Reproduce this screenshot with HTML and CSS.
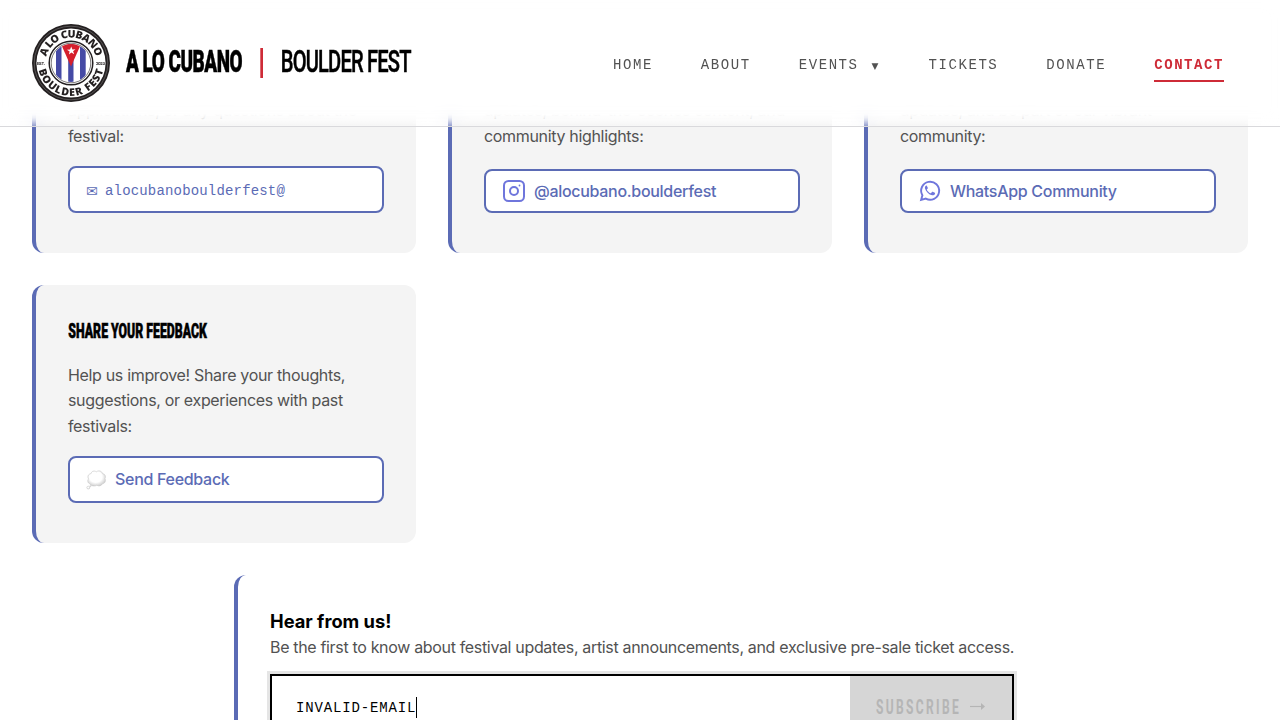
FILE: index.html
```html
<!DOCTYPE html>
<html lang="en">
<head>
<meta charset="utf-8">
<title>Contact | A Lo Cubano Boulder Fest</title>
<link rel="stylesheet" href="styles.css">
</head>
<body>
<header class="header">
  <a class="brand">
    <svg class="logo" width="78" height="78" viewBox="0 0 78 78">
      <defs>
        <path id="arc-top" d="M13.500 39a25.500 25.500 0 0 1 51 0"/>
        <path id="arc-bottom" d="M6 39a33 33 0 0 0 66 0"/>
        <clipPath id="flag"><circle cx="39" cy="39" r="19"/></clipPath>
      </defs>
      <circle cx="39" cy="39" r="39" fill="#231f20"/>
      <circle cx="39" cy="39" r="36.800" fill="none" stroke="#8b8889" stroke-width=".5"/>
      <circle cx="39" cy="39" r="34.600" fill="#fff"/>
      <circle cx="39" cy="39" r="21.800" fill="#fff" stroke="#231f20" stroke-width="1.500"/>
      <circle cx="39" cy="39" r="19.800" fill="none" stroke="#231f20" stroke-width=".6"/>
      <g clip-path="url(#flag)">
        <path fill="#454aa5" d="M24 19h5.500v40H24zM36.200 19h5.300v40h-5.300zM48 19h5.700v40H48z"/>
        <path fill="#d5202d" d="M28.500 19h21L39 42.500z"/>
        <path fill="#fff" d="M39.200 22.500l1.200 2.900 3.100-.2-2.400 2 1.100 3-2.800-1.600-2.500 2 .7-3.200-2.600-1.700 3.100-.3z"/>
      </g>
      <text class="logo-text"><textPath href="#arc-top" startOffset="50%" text-anchor="middle" textLength="67">A LO CUBANO</textPath></text>
      <text class="logo-text"><textPath href="#arc-bottom" startOffset="50%" text-anchor="middle" textLength="89">BOULDER FEST</textPath></text>
      <text class="logo-year" x="5" y="40.500" textLength="8">EST.</text>
      <text class="logo-year" x="64" y="40.500" textLength="9">2023</text>
    </svg>
    <svg class="wordmark" width="290" height="34" viewBox="0 0 290 34">
      <text class="word-bold" transform="scale(.62 1)" x="1.600" y="26.400" textLength="188">A LO CUBANO</text>
      <path fill="#ce2b37" d="M135.300 2h2.700v30h-2.700z"/>
      <text class="word" transform="scale(.66 1)" x="236" y="26.400" textLength="198">BOULDER FEST</text>
    </svg>
  </a>
  <nav class="nav">
    <a>HOME</a><a>ABOUT</a><a>EVENTS <span class="caret">▼</span></a><a>TICKETS</a><a>DONATE</a><a class="active">CONTACT</a>
  </nav>
</header>
<main class="main">
  <section class="cards">
    <article class="card">
      <p>applications, or any questions about the<br>festival:</p>
      <a class="button mail"><span class="envelope">✉</span><span>alocubanoboulderfest@</span></a>
    </article>
    <article class="card">
      <p>updates, behind-the-scenes content, and<br>community highlights:</p>
      <a class="button social">
        <svg width="24" height="24" viewBox="0 0 24 24" fill="none" stroke="#6f76dc" stroke-width="2"><rect x="2" y="2" width="20" height="20" rx="4.500"/><circle cx="12" cy="12" r="4"/><circle cx="17.500" cy="6.500" r=".9" fill="#6f76dc" stroke="none"/></svg>
        <span>@alocubano.boulderfest</span>
      </a>
    </article>
    <article class="card">
      <p>updates, and be part of our vibrant<br>community:</p>
      <a class="button social">
        <svg width="24" height="24" viewBox="0 0 24 24"><path fill="none" stroke="#6f76dc" stroke-width="1.900" d="M3.100 20.900l1.300-4.600A9 9 0 1 1 7.800 19.600z"/><path fill="#6f76dc" d="M8.900 7.100c-.3-.6-.7-.6-1-.4-.9.700-1.200 1.700-.9 2.700.9 3.200 3.800 6 7.100 6.900 1.300.2 2.500-.5 2.900-1.400.2-.6.1-1-.2-1.100l-2-1c-.3-.1-.6 0-.8.300l-.9 1c-.2.200-.4.200-.6.100-1.700-.8-2.800-1.900-3.600-3.300-.1-.2 0-.4.100-.6l.7-.8c.2-.2.200-.4.100-.7z"/></svg>
        <span>WhatsApp Community</span>
      </a>
    </article>
    <article class="card">
      <h3><svg width="150" height="26" viewBox="0 0 150 26"><text class="card-title" transform="scale(.6 1)" x="0.500" y="21.500" textLength="231">SHARE YOUR FEEDBACK</text></svg></h3>
      <p>Help us improve! Share your thoughts,<br>suggestions, or experiences with past<br>festivals:</p>
      <a class="button feedback">
        <svg width="21" height="22" viewBox="0 0 21 22">
          <defs><radialGradient id="cloud" cx=".45" cy=".4" r=".65"><stop offset=".55" stop-color="#fff"/><stop offset="1" stop-color="#c8c8c8"/></radialGradient></defs>
          <g fill="url(#cloud)" stroke="#c6c6c6" stroke-width=".6"><path d="M4.200 15C1.500 14 1.200 11.500 2.600 10 1 7.500 2.500 4.800 5 4.700 5.500 2 8.500 1.400 10.300 2.800 12.500 1 16 2 16.500 4.600c2.500.3 3.600 2.800 2.500 5 1.200 2.500-.3 5-2.700 5.200-.8 2.200-3.700 2.700-5.400 1.400-2.300 1.400-5.700 1-6.700-1.200z"/><circle cx="2.300" cy="18.600" r="1.400"/><circle cx="4.500" cy="17" r=".6"/></g>
        </svg>
        <span>Send Feedback</span>
      </a>
    </article>
  </section>
  <section class="newsletter">
    <h2>Hear from us!</h2>
    <p class="lead">Be the first to know about festival updates, artist announcements, and exclusive pre-sale ticket access.</p>
    <form class="form">
      <div class="field"><span>INVALID-EMAIL</span><i class="cursor"></i></div>
      <div class="submit">
        <svg width="112" height="24" viewBox="0 0 112 24"><text class="subscribe" transform="scale(.6 1)" x="0" y="19" textLength="138">SUBSCRIBE</text><path fill="none" stroke="#b5b5b5" stroke-width="1.200" d="M94 11.500h12"/><path fill="#b5b5b5" d="M105 8l4 3.500-4 3.500z"/></svg>
      </div>
    </form>
  </section>
</main>
</body>
</html>
```
FILE: styles.css
```css
* { box-sizing: border-box; }
body {
  margin: 0;
  height: 720px;
  overflow: hidden;
  background: #fff;
  color: #525252;
  font: 16px/25.6px Inter, "Liberation Sans", sans-serif;
}
.header {
  position: fixed;
  inset: 0 0 auto;
  z-index: 2;
  height: 127px;
  padding: 0 56px 0 32px;
  display: flex;
  justify-content: space-between;
  align-items: center;
  border-bottom: 1px solid #d9d9dc;
  background: linear-gradient(#fff 114px, rgba(255, 255, 255, .85) 118px, rgba(255, 255, 255, .15) 126px);
}
.header::before {
  content: "";
  position: absolute;
  inset: 0;
  z-index: -1;
  backdrop-filter: blur(8px);
  opacity: .5;
}
.brand { display: flex; align-items: center; gap: 15px; }
.logo, .wordmark { display: block; }
.wordmark { overflow: visible; }
.logo-text { font: 800 10.5px "Open Sans", sans-serif; fill: #231f20; }
.logo-year { font: 700 4px Inter, sans-serif; fill: #231f20; }
.word, .word-bold { font: 500 30.5px Roboto, sans-serif; fill: #000; }
.word { stroke: #000; stroke-width: .5px; }
.word-bold { font-weight: 900; stroke: #000; stroke-width: .5px; }
.nav {
  display: flex;
  gap: 48px;
  font: 14px/35px "Liberation Mono", monospace;
  letter-spacing: 1.57px;
  padding-top: 3px;
}
.nav a { height: 34px; white-space: pre; }
.nav .active { color: #ce2b37; font-weight: 700; border-bottom: 2px solid #ce2b37; }
.caret { display: inline-block; width: 9px; font: 9px "DejaVu Sans", sans-serif; letter-spacing: 0; margin-left: 3px; }
.main { height: 725px; overflow: hidden; padding: 0 32px; margin-top: -5px; }
.cards { display: grid; grid-template-columns: repeat(3, 384px); grid-auto-rows: 258px; gap: 32px; }
.card {
  display: flex;
  flex-direction: column;
  padding: 32px 32px 40px;
  border-left: 4px solid #5b6bb5;
  border-radius: 12px;
  background: #f4f4f4;
}
.card h3 { margin: 0; height: 26px; }
.card h3 svg { display: block; }
.card-title { font: 900 20.500px Roboto, sans-serif; fill: #000; stroke: #000; stroke-width: .6px; }
.card p { margin: auto 0 0; height: 93.3px; white-space: nowrap; letter-spacing: -.33px; }
.card:nth-child(1) p { height: 67.6px; }
.card:nth-child(2) p, .card:nth-child(3) p { height: 70.6px; }
.button {
  flex: none;
  display: flex;
  align-items: center;
  height: 47px;
  padding: 0 16px;
  border: 2px solid #5b6bb5;
  border-radius: 8px;
  background: #fff;
  color: #5b6bb5;
  font-weight: 500;
  letter-spacing: -.3px;
}
.mail { font: 14px "Liberation Mono", monospace; letter-spacing: .17px; padding-top: 2px; }
.envelope { width: 19px; font: 14px "DejaVu Sans", sans-serif; }
.social { height: 44px; gap: 8px; }
.social span { padding-top: 1px; }
.feedback { gap: 8px; }
.newsletter {
  width: 812px;
  height: 280px;
  margin: 32px auto 0;
  padding: 33px 32px;
  border-left: 4px solid #5b6bb5;
  border-radius: 12px;
}
.newsletter h2 { margin: 0; color: #000; font-size: 18.300px; font-weight: 700; line-height: 27px; }
.lead { margin: 0 0 13px; white-space: nowrap; letter-spacing: -.333px; }
.form {
  display: flex;
  width: 744px;
  height: 66px;
  border: 2px solid #000;
  box-shadow: 0 0 0 3px #e5e5e5;
}
.field { flex: 1; display: flex; align-items: center; padding: 2px 0 0 24px; color: #000; font: 14px "Liberation Mono", monospace; letter-spacing: .85px; }
.cursor { width: 1px; height: 21px; background: #000; }
.submit { width: 162px; display: flex; align-items: center; padding-left: 26px; background: #d6d6d6; }
.subscribe { font: 700 20px Roboto, sans-serif; fill: #b5b5b5; }
```
